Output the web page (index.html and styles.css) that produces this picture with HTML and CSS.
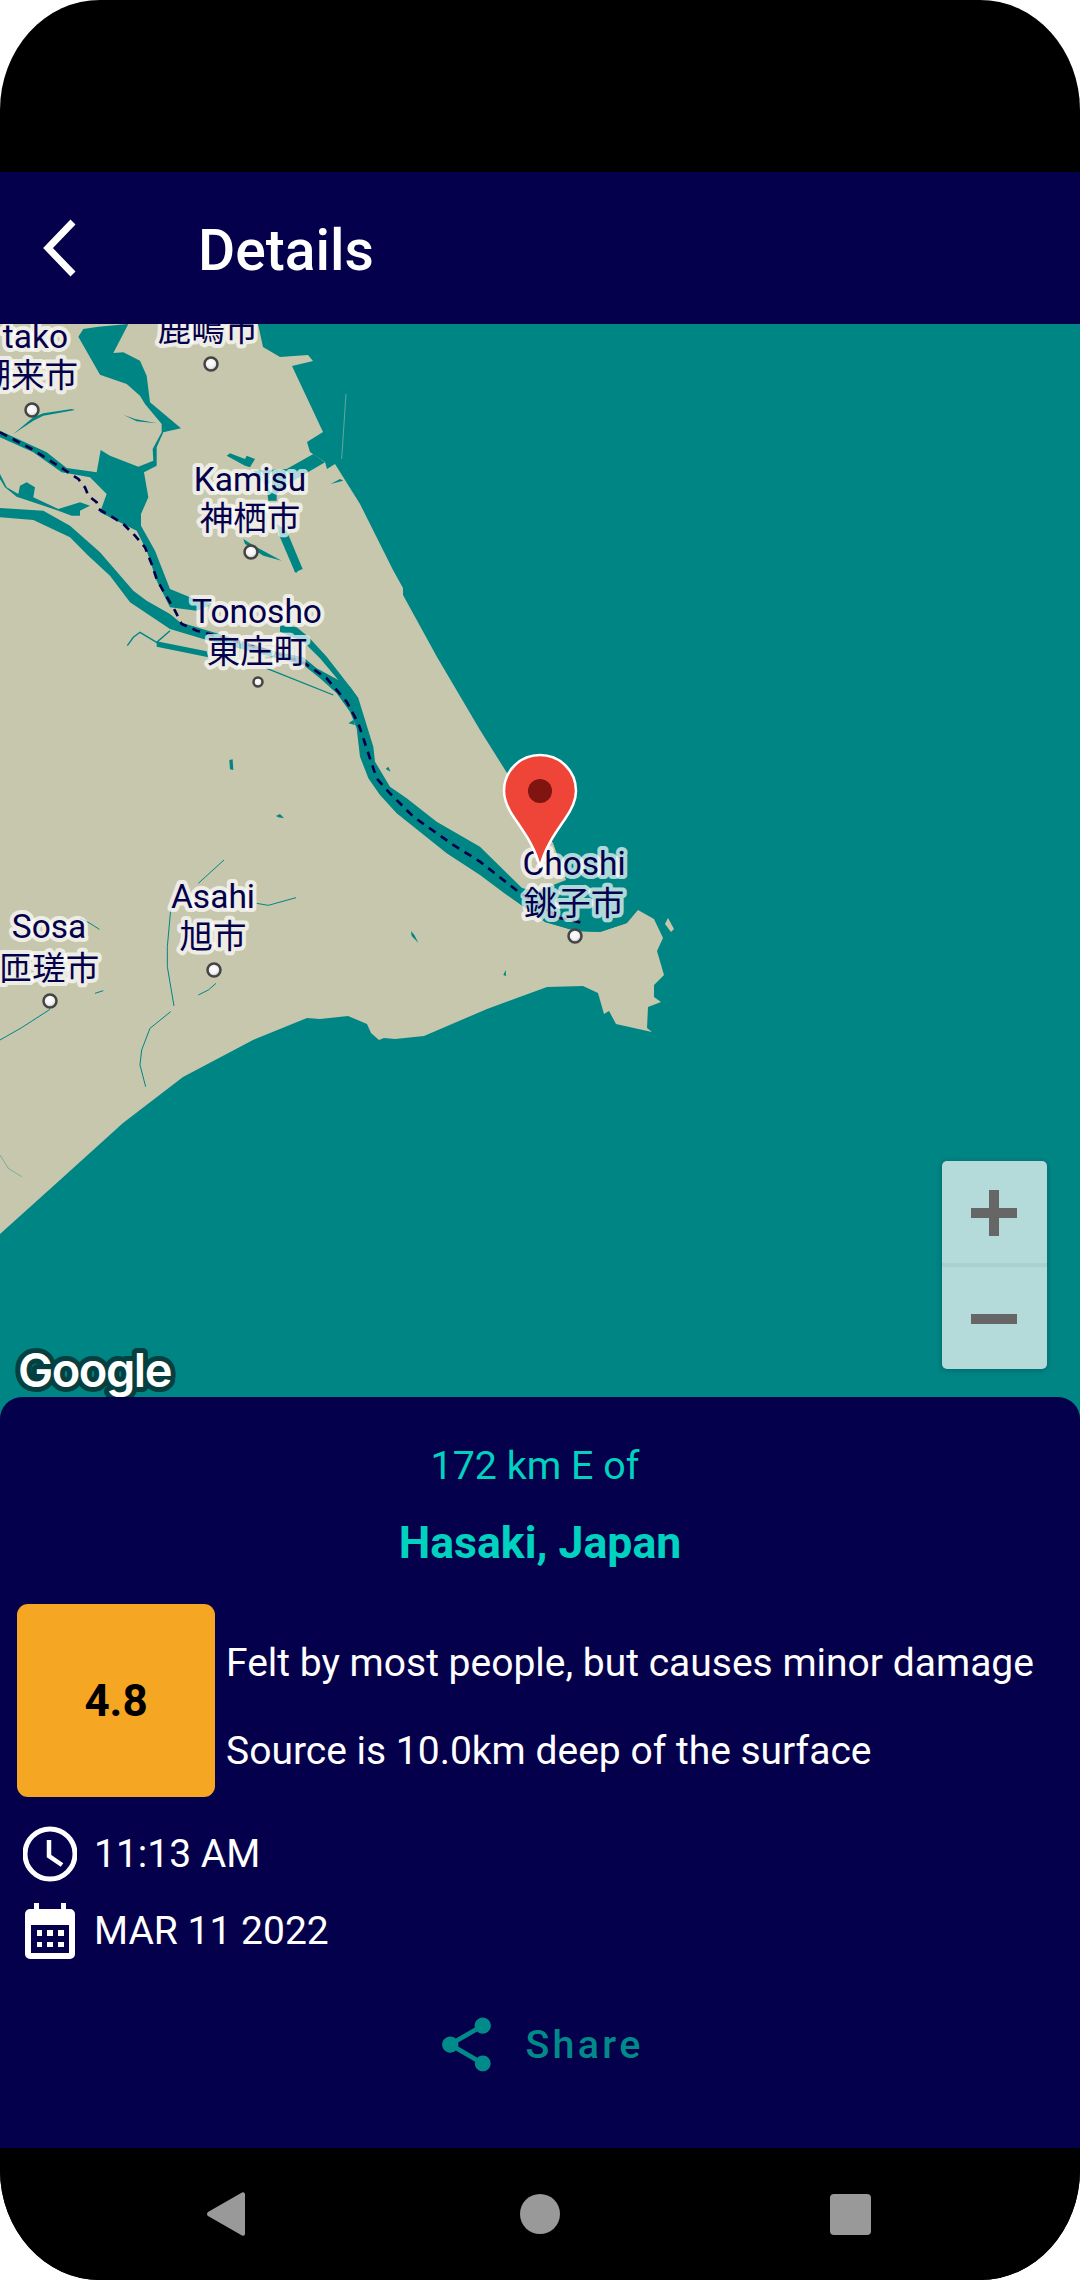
FILE: index.html
```html
<!DOCTYPE html>
<html lang="en">
<head>
    <meta charset="UTF-8">
    <meta name="viewport" content="width=device-width, initial-scale=1.0">
    <title>Details</title>
    <link rel="stylesheet" href="styles.css">
</head>
<body>
    <div class="phone">
        <div class="status-bar"></div>

        <header class="app-bar">
            <svg class="back-icon" viewBox="0 0 40 62"><path d="M33 5 8 31l25 26"/></svg>
            <h1>Details</h1>
        </header>

        <div class="map">
            <svg class="map-canvas" viewBox="0 324 1080 1097">
                <defs>
                    <radialGradient id="dot" cx="45%" cy="40%" r="60%">
                        <stop offset="0" stop-color="#fff"/>
                        <stop offset="0.6" stop-color="#f2f2f2"/>
                        <stop offset="1" stop-color="#b8b8b8"/>
                    </radialGradient>
                </defs>

                <!-- land -->
                <polygon class="land" points="0,324 258,324 263,347 280,357 308,355 313,361 292,366 323,432 307,442 310,452 313,454 325,462 327,469 335,464 360,504 393,570 403,588 403,595 437,657 480,730 507,773 553,843 566,880 540,890 530,905 545,922 576,931 600,932 627,923 638,910 654,919 663,938 657,951 664,975 654,985 654,997 661,1002 648,1007 647,1028 652,1032 616,1024 609,1011 604,1014 598,993 583,986 547,987 487,1009 424,1036 395,1039 384,1038 379,1040 371,1033 367,1024 348,1016 320,1019 307,1018 253,1040 183,1077 123,1123 60,1180 0,1234"/>
                <polygon class="land" points="665,924 668,918 674,929 671,932"/>

                <!-- water, upper left part -->
                <g transform="translate(0 324) scale(.33333)">
                    <polygon class="water" points="235,38 250,15 295,8 385,0 340,87 370,85 420,110 440,155 450,235 543,313 490,325 470,370 470,425 432,445 445,520 423,570 423,605 465,680 510,795 570,820 640,840 590,860 510,850 495,820 470,770 440,680 410,620 350,590 300,565 320,510 270,460 185,445 100,385 0,340 0,320 140,385 200,432 290,445 302,378 330,395 415,428 460,410 458,375 485,325 485,300 435,240 420,215 380,180 300,152"/>
                    <polygon class="water" points="0,450 20,490 55,510 60,485 80,475 105,490 100,520 175,555 240,535 270,545 240,560 240,575 215,575 175,560 50,518 15,490 0,465"/>
                    <polygon class="water" points="0,552 130,560 210,605 300,685 400,800 440,830 510,870 540,895 640,925 820,980 910,1000 950,1033 1015,1068 1050,1088 1075,1123 1120,1268 1125,1313 1170,1388 1220,1423 1310,1493 1440,1568 1566,1692 1725,1728 1875,1743 1881,1797 1800,1824 1728,1821 1635,1794 1512,1707 1440,1653 1340,1588 1190,1468 1140,1413 1105,1363 1080,1298 1070,1213 1050,1163 1010,1108 960,1063 910,1023 610,945 510,915 390,835 330,755 265,695 210,640 100,588 0,580"/>
                    <polygon class="water" points="840,903 890,910 925,938 980,998 1050,1088 1075,1123 1060,1158 1015,1068 960,1003 910,953 840,923"/>
                    <polygon class="water" points="470,952 620,982 625,1000 470,968"/>
                    <polygon class="water" points="680,395 690,388 735,405 740,395 765,405 750,430 735,425"/>
                    <polygon class="water" points="760,440 860,435 940,390 975,415 880,470 830,510 830,530 805,530 800,490"/>
                    <polygon class="water" points="830,600 860,620 908,735 885,745 840,640"/>
                    <polygon class="water" points="730,645 770,670 845,710 790,695 735,660"/>
                    <polygon class="water" points="40,330 100,280 130,268 215,255 225,258 130,275 100,290"/>
                    <polygon class="water" points="370,272 405,285 470,298 410,292"/>
                    <polygon class="water" points="992,480 1020,465 1030,470"/>
                    <polyline class="creek" points="382,965 400,940 420,925 470,955 510,920"/>
                    <polyline class="shoal" points="1038,210 1025,405"/>
                </g>

                <!-- little ponds and creeks, lower part -->
                <g transform="translate(120 570) scale(.33333)">
                    <polygon class="water" points="328,570 338,568 340,600 330,598"/>
                    <polygon class="water" points="468,738 480,732 492,745 475,742"/>
                    <polygon class="water" points="797,597 805,590 812,605"/>
                    <polygon class="water" points="685,460 700,450 705,465"/>
                    <polygon class="water" points="522,5 535,0 530,8"/>
                    <polyline class="creek" points="440,295 640,375"/>
                    <polyline class="creek thin" points="235,940 312,870"/>
                    <polyline class="creek thin" points="410,1000 445,1006 528,983"/>
                    <polygon class="water" points="873,1083 883,1095 895,1118 875,1098"/>
                    <polygon class="water" points="1150,1215 1157,1200 1158,1218"/>
                </g>
                <g transform="translate(0 860) scale(.33333)">
                    <polyline class="creek thin" points="512,150 502,260 502,320 522,438"/>
                    <polyline class="creek thin" points="512,455 450,505 425,570 420,615 437,680"/>
                    <polyline class="creek thin" points="595,405 625,390 648,370"/>
                    <polyline class="creek thin" points="0,540 65,503 150,448"/>
                    <polyline class="creek thin" points="285,400 310,392"/>
                    <polyline class="creek thin" points="240,175 270,190 298,208"/>
                    <polyline class="creek faint" points="0,885 25,925 65,950"/>
                </g>

                <!-- railway -->
                <polyline class="rail" transform="translate(0 324) scale(.33333)" points="0,325 95,375 190,435 235,465 255,490 265,515 290,535 295,555 330,575 370,600 405,635 435,670 455,720 470,765 495,810 525,860 545,900 590,920 700,950 820,985 915,1018 980,1063 1040,1133 1075,1198 1105,1288 1130,1363 1170,1408 1240,1478 1360,1563 1440,1613 1560,1707 1680,1782 1749,1797"/>

                <!-- towns -->
                <circle class="town" cx="211" cy="364" r="6.5"/>
                <circle class="town" cx="32" cy="410" r="6.5"/>
                <circle class="town" cx="251" cy="552" r="6.5"/>
                <circle class="town" cx="258" cy="682" r="4.5"/>
                <circle class="town" cx="214" cy="970" r="6.5"/>
                <circle class="town" cx="50" cy="1001" r="6.5"/>
                <circle class="town" cx="575" cy="936" r="6.5"/>

                <text class="label" x="208" y="341">鹿嶋市</text>
                <text class="label label-end" x="68" y="348">tako</text>
                <text class="label label-end" x="78" y="387">潮来市</text>
                <text class="label" x="250" y="491">Kamisu</text>
                <text class="label" x="250" y="530">神栖市</text>
                <text class="label" x="257" y="623">Tonosho</text>
                <text class="label" x="257" y="663">東庄町</text>
                <text class="label" x="213" y="908">Asahi</text>
                <text class="label" x="213" y="948">旭市</text>
                <text class="label" x="49" y="938">Sosa</text>
                <text class="label" x="49" y="980">匝瑳市</text>
                <text class="label" x="574" y="875">Choshi</text>
                <text class="label" x="574" y="915">銚子市</text>

                <!-- marker -->
                <path class="pin" d="M540 755c-20 0-36 16-36 36 0 10 4 18 11 28 11 16 21 30 25 49 4-19 14-33 25-49 7-10 11-18 11-28 0-20-16-36-36-36z"/>
                <circle class="pin-dot" cx="540" cy="791" r="12"/>

                <text class="google" x="18" y="1387">Google</text>
            </svg>

            <div class="zoom-control">
                <div class="zoom-btn zoom-in"><span class="zoom-bar"></span><span class="zoom-bar zoom-bar-v"></span></div>
                <div class="zoom-btn"><span class="zoom-bar"></span></div>
            </div>
        </div>

        <section class="panel">
            <p class="distance">172 km E of</p>
            <h2 class="place">Hasaki, Japan</h2>

            <div class="summary">
                <div class="magnitude">4.8</div>
                <div class="summary-text">
                    <p>Felt by most people, but causes minor damage</p>
                    <p>Source is 10.0km deep of the surface</p>
                </div>
            </div>

            <div class="meta-row">
                <svg class="meta-icon" viewBox="0 0 54 56">
                    <circle class="clock-face" cx="27" cy="28" r="25"/>
                    <path class="clock-hand" d="M26 14v16l13 9"/>
                </svg>
                <span>11:13 AM</span>
            </div>
            <div class="meta-row">
                <svg class="meta-icon" viewBox="0 0 54 56">
                    <path class="cal-body" d="M11 0h5v6h22V0h5v6h4a5 5 0 0 1 5 5v40a5 5 0 0 1-5 5H7a5 5 0 0 1-5-5V11a5 5 0 0 1 5-5h4z"/>
                    <rect class="cal-inner" x="8" y="22" width="38" height="28"/>
                    <path class="cal-body" d="M14 27h5v6h-5zM24 27h6v6h-6zM35 27h6v6h-6zM14 39h5v5h-5zM24 39h6v5h-6zM35 39h6v5h-6z"/>
                </svg>
                <span>MAR 11 2022</span>
            </div>

            <div class="share">
                <svg class="share-icon" viewBox="0 0 24 24"><path d="M18 16.08c-.76 0-1.44.3-1.96.77L8.91 12.7c.05-.23.09-.46.09-.7s-.04-.47-.09-.7l7.05-4.11c.54.5 1.25.81 2.04.81 1.66 0 3-1.34 3-3s-1.34-3-3-3-3 1.34-3 3c0 .24.04.47.09.7L8.04 9.81C7.5 9.31 6.79 9 6 9c-1.66 0-3 1.34-3 3s1.34 3 3 3c.79 0 1.5-.31 2.04-.81l7.12 4.16c-.05.21-.08.43-.08.65 0 1.61 1.31 2.92 2.92 2.92 1.61 0 2.92-1.31 2.92-2.92s-1.31-2.92-2.92-2.92z"/></svg>
                <span>Share</span>
            </div>
        </section>

        <nav class="nav-bar">
            <svg class="nav-back" viewBox="0 0 40 46"><path d="M36 1.5a2 2 0 0 1 3 1.5v40a2 2 0 0 1-3 1.5L2 25a2.500 2.500 0 0 1 0-4z"/></svg>
            <span class="nav-home"></span>
            <span class="nav-recent"></span>
        </nav>
    </div>
</body>
</html>
```

FILE: styles.css
```css
body {
    margin: 0;
    background: #fff;
    font-family: Roboto, sans-serif;
}
p, h1, h2 {
    margin: 0;
    font-weight: inherit;
}
.phone {
    width: 1080px;
    height: 2280px;
    display: flex;
    flex-direction: column;
    background: #000;
    border-radius: 100px / 110px;
    overflow: hidden;
}
.status-bar {
    height: 172px;
    flex: none;
}
.app-bar {
    height: 152px;
    flex: none;
    display: flex;
    align-items: center;
    background: #05004b;
    color: #fff;
}
.back-icon {
    width: 40px;
    height: 62px;
    margin-left: 40px;
    fill: none;
    stroke: #fff;
    stroke-width: 7;
}
.app-bar h1 {
    margin: 4px 0 0 118px;
    font-size: 57px;
    font-weight: 500;
}

/* map */
.map {
    position: relative;
    height: 1097px;
    flex: none;
    background: #008585;
}
.map-canvas {
    display: block;
    width: 1080px;
    height: 1097px;
}
.land { fill: #c7c7ad; }
.water { fill: #008585; }
.creek {
    fill: none;
    stroke: #008585;
    stroke-width: 4;
}
.creek.thin { stroke-width: 3; }
.creek.faint { stroke-width: 2; opacity: 0.6; }
.shoal {
    fill: none;
    stroke: #5fa9a0;
    stroke-width: 3;
}
.rail {
    fill: none;
    stroke: #05004b;
    stroke-width: 8;
    stroke-dasharray: 24 19;
}
.town {
    fill: url(#dot);
    stroke: #444;
    stroke-width: 2.5;
}
.label {
    font-family: Roboto, "Noto Sans CJK JP", sans-serif;
    font-size: 33.5px;
    text-anchor: middle;
    fill: #05004b;
    stroke: rgba(255, 255, 255, 0.7);
    stroke-width: 8;
    stroke-linejoin: round;
    paint-order: stroke;
}
.label-end { text-anchor: end; }
.pin {
    fill: #ef4538;
    stroke: #fff;
    stroke-width: 2.5;
}
.pin-dot { fill: #7f1410; }
.google {
    font-family: Inter, sans-serif;
    font-size: 47px;
    font-weight: 600;
    letter-spacing: -1.5px;
    fill: #fff;
    stroke: #063f40;
    stroke-width: 10;
    stroke-linejoin: round;
    paint-order: stroke;
}
.zoom-control {
    position: absolute;
    top: 837px;
    left: 942px;
    width: 105px;
    height: 208px;
    display: flex;
    flex-direction: column;
    background: #b4dada;
    border-radius: 5px;
    box-shadow: 0 1px 6px rgba(0, 0, 0, 0.25);
}
.zoom-btn {
    position: relative;
    flex: 1;
}
.zoom-in { border-bottom: 4px solid #a9d1d1; }
.zoom-bar {
    position: absolute;
    left: 29px;
    top: 47px;
    width: 46px;
    height: 10px;
    background: #666;
}
.zoom-bar-v {
    left: 47px;
    top: 29px;
    width: 10px;
    height: 46px;
}

/* bottom sheet */
.panel {
    position: relative;
    height: 751px;
    flex: none;
    margin-top: -24px;
    box-sizing: border-box;
    background: #05004b;
    border-radius: 22px 22px 0 0;
    color: #fff;
    font-size: 39px;
}
.distance {
    padding: 45px 10px 0 0;
    text-align: center;
    color: #00d2bf;
    font-size: 39.4px;
    line-height: 48px;
}
.place {
    margin-top: 28px;
    text-align: center;
    color: #00d2bf;
    font-size: 44.6px;
    font-weight: 700;
    line-height: 50px;
}
.summary {
    display: flex;
    gap: 11px;
    margin: 36px 0 0 17px;
}
.magnitude {
    width: 198px;
    height: 193px;
    display: flex;
    align-items: center;
    justify-content: center;
    background: #f5a623;
    border-radius: 11px;
    color: #000;
    font-size: 44px;
    font-weight: 700;
}
.summary-text {
    display: flex;
    flex-direction: column;
    gap: 44px;
    padding-top: 37px;
    line-height: 44px;
}
.meta-row {
    display: flex;
    align-items: center;
    gap: 17px;
    height: 56px;
    margin: 29px 0 0 23px;
}
.meta-row + .meta-row { margin-top: 21px; }
.meta-icon {
    width: 54px;
    height: 56px;
    flex: none;
}
.clock-face, .clock-hand {
    fill: none;
    stroke: #fff;
    stroke-width: 5;
}
.clock-hand { stroke-width: 4.5; }
.cal-body { fill: #fff; }
.cal-inner { fill: #05004b; }
.share {
    display: flex;
    align-items: center;
    justify-content: center;
    margin-top: 53px;
    padding-right: 2px;
    color: #008a8a;
    font-size: 39.4px;
    font-weight: 500;
    letter-spacing: 3.3px;
}
.share-icon {
    width: 65px;
    height: 65px;
    margin-right: 26px;
    fill: #008a8a;
}
.nav-bar {
    flex: 1;
    position: relative;
    display: flex;
    align-items: center;
    background: #000;
}
.nav-back {
    width: 40px;
    height: 46px;
    margin-left: 206px;
    fill: #999;
}
.nav-home {
    width: 40px;
    height: 40px;
    margin-left: 274px;
    background: #999;
    border-radius: 50%;
}
.nav-recent {
    width: 41px;
    height: 41px;
    margin-left: 270px;
    background: #999;
    border-radius: 4px;
}
```
